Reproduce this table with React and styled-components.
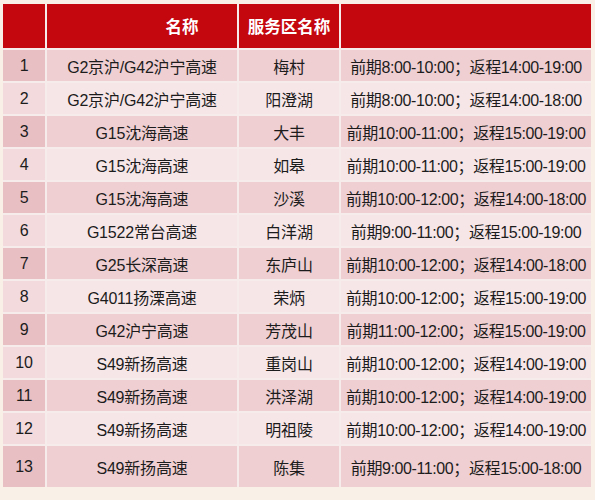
import React from "react";
import styled, { createGlobalStyle } from "styled-components";

const rows = [
    ["1", "G2京沪/G42沪宁高速", "梅村", "前期8:00-10:00；返程14:00-19:00"],
    ["2", "G2京沪/G42沪宁高速", "阳澄湖", "前期8:00-10:00；返程14:00-18:00"],
    ["3", "G15沈海高速", "大丰", "前期10:00-11:00；返程15:00-19:00"],
    ["4", "G15沈海高速", "如皋", "前期10:00-11:00；返程15:00-19:00"],
    ["5", "G15沈海高速", "沙溪", "前期10:00-12:00；返程14:00-18:00"],
    ["6", "G1522常台高速", "白洋湖", "前期9:00-11:00；返程15:00-19:00"],
    ["7", "G25长深高速", "东庐山", "前期10:00-12:00；返程14:00-18:00"],
    ["8", "G4011扬溧高速", "荣炳", "前期10:00-12:00；返程15:00-19:00"],
    ["9", "G42沪宁高速", "芳茂山", "前期11:00-12:00；返程15:00-19:00"],
    ["10", "S49新扬高速", "重岗山", "前期10:00-12:00；返程14:00-19:00"],
    ["11", "S49新扬高速", "洪泽湖", "前期10:00-12:00；返程14:00-19:00"],
    ["12", "S49新扬高速", "明祖陵", "前期10:00-12:00；返程14:00-19:00"],
    ["13", "S49新扬高速", "陈集", "前期9:00-11:00；返程15:00-18:00"],
];

const GlobalStyle = createGlobalStyle`
    body {
        margin: 0;
        background: #f9f1e8;
        font-family: "Liberation Sans", "Noto Sans CJK SC", sans-serif;
    }
`;

const Page = styled.div`
    width: 595px;
    height: 500px;
    padding: 4px 4px 0 3px;
    box-sizing: border-box;
`;

const Table = styled.div`
    display: grid;
    grid-template-columns: 42px 190px 100px 1fr;
    grid-template-rows: 44px repeat(12, 31px) 41px;
    gap: 2px;
    background: #f7ecec;
`;

const Head = styled.div`
    background: #c4060f;
    color: #fff;
    font-weight: bold;
    font-size: 16.5px;
    display: flex;
    align-items: center;
    justify-content: center;
    padding-left: ${(p) => p.$shift || 0}px;
`;

const Cell = styled.div`
    display: flex;
    align-items: center;
    justify-content: center;
    font-size: 16px;
    color: #1c1c1c;
    white-space: nowrap;
    letter-spacing: ${(p) => (p.$time ? "-0.4px" : "-0.2px")};
    background: ${(p) =>
        p.$odd
            ? p.$first
                ? "#e8c0c4"
                : "#efcfd2"
            : p.$first
            ? "#f2dadd"
            : "#f7e6e8"};
`;

const App = () => (
    <Page>
        <GlobalStyle />
        <Table>
            <Head />
            <Head $shift={80}>名称</Head>
            <Head>服务区名称</Head>
            <Head />
            {rows.map((r, i) =>
                r.map((text, j) => (
                    <Cell
                        key={i + "-" + j}
                        $odd={i % 2 === 0}
                        $first={j === 0}
                        $time={j === 3}
                    >
                        {text}
                    </Cell>
                ))
            )}
        </Table>
    </Page>
);

export default App;
